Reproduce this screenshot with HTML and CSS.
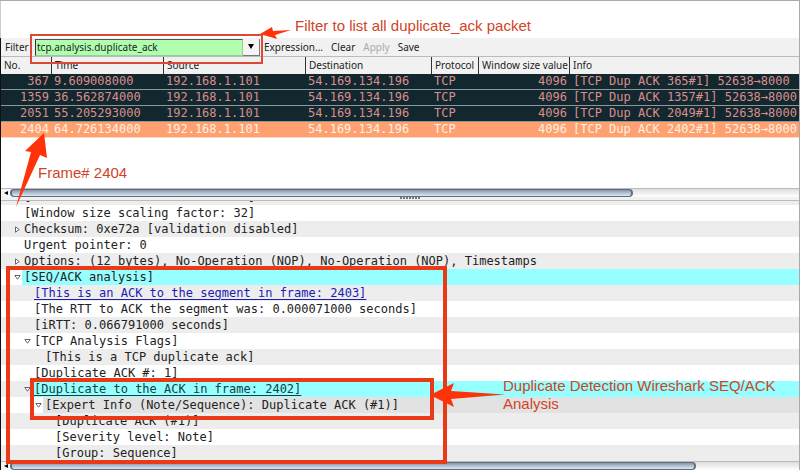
FILE: index.html
```html
<!DOCTYPE html>
<html lang="en">
<head>
    <meta charset="UTF-8">
    <title>Wireshark - tcp.analysis.duplicate_ack</title>
    <link rel="stylesheet" href="styles.css">
</head>
<body>
    <div class="top-space"></div>

    <main class="window">
        <form class="filter-bar">
            <label for="filter">Filter</label>
            <div class="combo">
                <input type="text" id="filter" value="tcp.analysis.duplicate_ack" spellcheck="false">
                <button type="button" class="combo-arrow" aria-label="Filter history">
                    <svg width="6" height="5" viewBox="0 0 6 5"><path d="M0 0h6L3 5z"/></svg>
                </button>
            </div>
            <div class="filter-actions">
                <button type="button">Expression...</button>
                <button type="button">Clear</button>
                <button type="button" disabled>Apply</button>
                <button type="button">Save</button>
            </div>
        </form>

        <section class="packet-pane">
            <table class="packets">
                <colgroup>
                    <col class="col-no">
                    <col class="col-time">
                    <col class="col-source">
                    <col class="col-dest">
                    <col class="col-proto">
                    <col class="col-window">
                    <col>
                </colgroup>
                <thead>
                    <tr><th>No.</th><th>Time</th><th>Source</th><th>Destination</th><th>Protocol</th><th>Window size value</th><th>Info</th></tr>
                </thead>
                <tbody>
                    <tr><td class="num">367</td><td>9.609008000</td><td>192.168.1.101</td><td>54.169.134.196</td><td>TCP</td><td class="num">4096</td><td>[TCP Dup ACK 365#1] 52638→8000</td></tr>
                    <tr><td class="num">1359</td><td>36.562874000</td><td>192.168.1.101</td><td>54.169.134.196</td><td>TCP</td><td class="num">4096</td><td>[TCP Dup ACK 1357#1] 52638→8000</td></tr>
                    <tr><td class="num">2051</td><td>55.205293000</td><td>192.168.1.101</td><td>54.169.134.196</td><td>TCP</td><td class="num">4096</td><td>[TCP Dup ACK 2049#1] 52638→8000</td></tr>
                    <tr class="selected"><td class="num">2404</td><td>64.726134000</td><td>192.168.1.101</td><td>54.169.134.196</td><td>TCP</td><td class="num">4096</td><td>[TCP Dup ACK 2402#1] 52638→8000</td></tr>
                </tbody>
            </table>
        </section>

        <div class="scrollbar">
            <button type="button" class="scroll-left" aria-label="Scroll left"><svg width="4" height="4" viewBox="0 0 4 4"><path d="M4 0v4L0 2z"/></svg></button>
            <div class="track"><div class="thumb thumb-list"></div></div>
        </div>
        <div class="splitter"><span class="grip"></span></div>

        <section class="details-pane">
            <div class="tree-view">
                <ul class="tree">
                    <li><span class="label">[Calculated window size: 131072]</span></li>
                    <li><span class="label">[Window size scaling factor: 32]</span></li>
                    <li><button type="button" class="toggle" aria-label="Expand"><svg width="5" height="7" viewBox="0 0 5 7"><path d="M.5.8v5.4L4.2 3.5z"/></svg></button><span class="label">Checksum: 0xe72a [validation disabled]</span></li>
                    <li><span class="label">Urgent pointer: 0</span></li>
                    <li><button type="button" class="toggle" aria-label="Expand"><svg width="5" height="7" viewBox="0 0 5 7"><path d="M.5.8v5.4L4.2 3.5z"/></svg></button><span class="label">Options: (12 bytes), No-Operation (NOP), No-Operation (NOP), Timestamps</span></li>
                    <li><button type="button" class="toggle" aria-label="Collapse"><svg width="7" height="5" viewBox="0 0 7 5"><path d="M.8.5h5.4L3.5 4.2z"/></svg></button><span class="label cyan">[SEQ/ACK analysis]</span></li>
                    <li class="level-1"><span class="label"><a href="#frame-2403">[This is an ACK to the segment in frame: 2403]</a></span></li>
                    <li class="level-1"><span class="label">[The RTT to ACK the segment was: 0.000071000 seconds]</span></li>
                    <li class="level-1"><span class="label">[iRTT: 0.066791000 seconds]</span></li>
                    <li class="level-1"><button type="button" class="toggle" aria-label="Collapse"><svg width="7" height="5" viewBox="0 0 7 5"><path d="M.8.5h5.4L3.5 4.2z"/></svg></button><span class="label">[TCP Analysis Flags]</span></li>
                    <li class="level-2"><span class="label">[This is a TCP duplicate ack]</span></li>
                    <li class="level-1"><span class="label">[Duplicate ACK #: 1]</span></li>
                    <li class="level-1"><button type="button" class="toggle" aria-label="Collapse"><svg width="7" height="5" viewBox="0 0 7 5"><path d="M.8.5h5.4L3.5 4.2z"/></svg></button><span class="label cyan"><a class="dark" href="#frame-2402">[Duplicate to the ACK in frame: 2402]</a></span></li>
                    <li class="level-2"><button type="button" class="toggle" aria-label="Collapse"><svg width="7" height="5" viewBox="0 0 7 5"><path d="M.8.5h5.4L3.5 4.2z"/></svg></button><span class="label gray">[Expert Info (Note/Sequence): Duplicate ACK (#1)]</span></li>
                    <li class="level-3"><span class="label">[Duplicate ACK (#1)]</span></li>
                    <li class="level-3"><span class="label">[Severity level: Note]</span></li>
                    <li class="level-3"><span class="label">[Group: Sequence]</span></li>
                </ul>
            </div>
            <div class="scrollbar">
                <button type="button" class="scroll-left" aria-label="Scroll left"><svg width="4" height="4" viewBox="0 0 4 4"><path d="M4 0v4L0 2z"/></svg></button>
                <div class="track"><div class="thumb thumb-details"></div></div>
            </div>

            <!-- notes on the details tree -->
            <div class="mark mark-analysis"></div>
            <div class="mark mark-duplicate"></div>
            <svg class="arrow arrow-duplicate" width="76" height="26" viewBox="0 0 76 26"><path d="M0 13 24 1 21 9 75 12.500 21 17 24 25z"/></svg>
            <p class="note note-duplicate">Duplicate Detection Wireshark SEQ/ACK Analysis</p>
        </section>
    </main>

    <!-- notes on the filter and the packet list -->
    <div class="mark mark-filter"></div>
    <svg class="arrow arrow-filter" width="32" height="14" viewBox="0 0 32 14"><path d="M0 8 12 1 13 5 31 4 15 9 17 13z"/></svg>
    <p class="note note-filter">Filter to list all duplicate_ack packet</p>
    <svg class="arrow arrow-frame" width="34" height="76" viewBox="0 0 34 76"><path d="M29 1 10 19 16 20 1 75 25 23 32 26z"/></svg>
    <p class="note note-frame">Frame# 2404</p>
</body>
</html>
```

FILE: styles.css
```css
* {
    box-sizing: border-box;
}

body {
    position: relative;
    display: flex;
    flex-direction: column;
    min-height: 100vh;
    margin: 0;
    overflow-x: hidden;
    background: #fff;
    border-top: 1px solid #aaa;
    border-right: 1px solid #aaa;
    font-family: "Noto Sans", sans-serif;
    font-size: 10px;
    color: #222;
}

button {
    padding: 0;
    border: none;
    background: none;
    font: inherit;
    color: inherit;
}

button:disabled {
    color: #aaa;
}

svg {
    display: block;
}

.top-space {
    height: 37px;
    border-left: 1px solid #ccc;
}

.window {
    display: flex;
    flex: 1;
    flex-direction: column;
    border-left: 1px solid #111;
}

/* filter toolbar */
.filter-bar {
    display: flex;
    align-items: center;
    gap: 4px;
    height: 19px;
    padding-left: 4px;
    background: #f1f1f1;
    border-bottom: 1px solid #bbb;
}

.filter-bar label {
    width: 26px;
}

.combo {
    display: flex;
    width: 225px;
    height: 17px;
}

.combo input {
    flex: 1;
    min-width: 0;
    padding: 0 1px;
    border: 1px solid #9c9;
    border-top-color: #555;
    border-left-color: #333;
    background: #afffaf;
    font: inherit;
    color: #222;
}

.combo-arrow {
    display: flex;
    align-items: center;
    justify-content: center;
    width: 17px;
    background: #f4f4f4;
    border-right: 1px solid #777;
    border-bottom: 1px solid #777;
}

.filter-actions {
    display: flex;
    gap: 8px;
}

/* packet list */
.packet-pane {
    flex: 1;
}

.packets {
    width: 100%;
    table-layout: fixed;
    border-collapse: separate;
    border-spacing: 0;
}

.col-no { width: 50px; }
.col-time { width: 112px; }
.col-source { width: 142px; }
.col-dest { width: 126px; }
.col-proto { width: 47px; }
.col-window { width: 91px; }

.packets th,
.packets td {
    height: 16px;
    padding: 0 2px 0 3px;
    overflow: hidden;
    line-height: 15px;
    text-align: left;
    white-space: nowrap;
}

.packets th {
    height: 17px;
    padding-right: 0;
    background: #f1f1f1;
    border-left: 1px solid #333;
    font-weight: normal;
}

.packets th:first-child {
    border-left: none;
}

.packets td {
    background: #12272e;
    border-bottom: 1px solid #8b989c;
    font-family: "DejaVu Sans Mono", monospace;
    font-size: 12px;
    color: #d98f8d;
}

.packets td:last-child {
    padding-left: 4px;
    padding-right: 0;
}

.packets .selected td {
    background: #ffa070;
    border-bottom-color: #ffd9c4;
    color: #fff0e0;
}

.packets .num {
    text-align: right;
}

/* scrollbars */
.scrollbar {
    display: flex;
    height: 9px;
    background: #f4f4f4;
    border-top: 1px solid #bbb;
}

.scroll-left {
    display: flex;
    align-items: center;
    justify-content: center;
    width: 9px;
}

.track {
    flex: 1;
    background: linear-gradient(#ddd, #fff);
}

.thumb {
    height: 8px;
    border: 1px solid #5f6d80;
    border-right-width: 2px;
    border-left-width: 2px;
    border-radius: 4px;
    background: linear-gradient(#8795aa, #b4c1d2 50%, #d9e6f2);
}

.thumb-list {
    width: 79%;
}

.thumb-details {
    width: 87%;
}

.splitter {
    display: flex;
    justify-content: center;
    height: 4px;
    padding-left: 20px;
    background: #f1f1f1;
    border-bottom: 1px solid #bbb;
}

.grip {
    width: 20px;
    height: 2px;
    background: repeating-linear-gradient(90deg, #777 0 2px, #eee 2px 3px);
}

/* packet details */
.details-pane {
    position: relative;
}

.tree-view {
    overflow: hidden;
}

.tree {
    margin: -12px 0 0;
    padding: 0;
    list-style: none;
    font-family: "DejaVu Sans Mono", monospace;
    font-size: 12px;
    line-height: 16px;
    color: #222;
}

.tree li {
    display: grid;
    grid-template-columns: 10px 1fr;
    height: 16px;
    padding-left: 11px;
}

.tree li:nth-child(odd) {
    background: #ededed;
}

.tree .level-1 { padding-left: 21px; }
.tree .level-2 { padding-left: 32px; }
.tree .level-3 { padding-left: 42px; }

.toggle {
    display: flex;
    align-items: center;
    justify-content: center;
}

.toggle path {
    fill: #fff;
    stroke: #666;
}

.label {
    grid-column: 2;
    padding-left: 2px;
    white-space: nowrap;
}

.label a {
    color: #1c1cb0;
    text-underline-offset: 2px;
}

.label .dark {
    color: #124044;
}

.cyan {
    background: #96ffff;
}

.gray {
    background: #e2e2e2;
}

/* red notes drawn over the window */
.mark {
    position: absolute;
    border: 4px solid #ea3917;
    pointer-events: none;
}

.mark-filter {
    top: 33px;
    left: 30px;
    width: 233px;
    height: 30px;
    border-width: 2px;
    border-color: #dc4935;
}

.mark-analysis {
    top: 65px;
    left: 5px;
    width: 441px;
    height: 198px;
}

.mark-duplicate {
    top: 177px;
    left: 29px;
    width: 404px;
    height: 42px;
}

.arrow {
    position: absolute;
    fill: #ff3208;
    pointer-events: none;
}

.arrow-filter {
    top: 25px;
    left: 260px;
}

.arrow-frame {
    top: 131px;
    left: 15px;
}

.arrow-duplicate {
    top: 181px;
    left: 429px;
}

.note {
    position: absolute;
    margin: 0;
    font-family: "Liberation Sans", sans-serif;
    font-size: 15px;
    line-height: 18px;
    color: #d04426;
}

.note-filter {
    top: 16px;
    left: 295px;
}

.note-frame {
    top: 163px;
    left: 38px;
}

.note-duplicate {
    top: 176px;
    left: 502px;
    width: 285px;
}
```
